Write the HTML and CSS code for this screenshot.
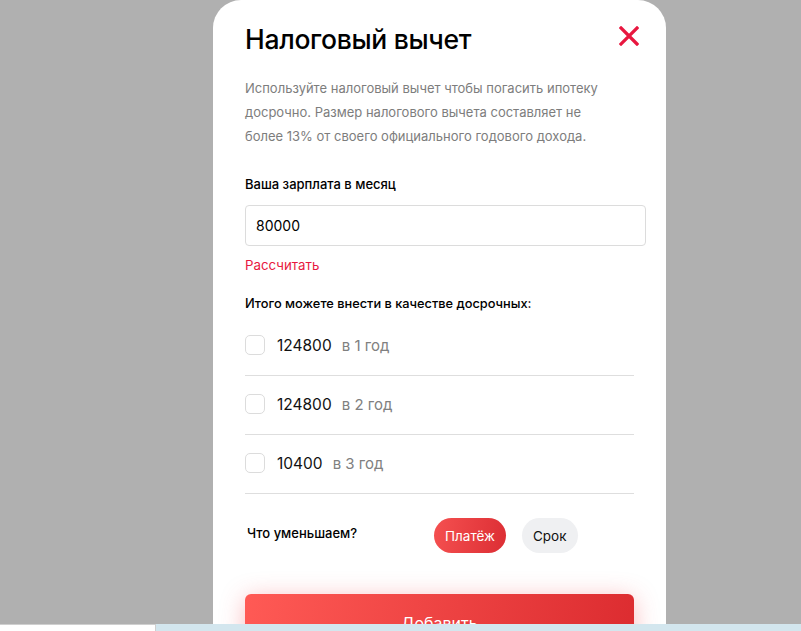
FILE: index.html
```html
<!DOCTYPE html>
<html lang="ru">
<head>
<meta charset="utf-8">
<title>Налоговый вычет</title>
<link rel="stylesheet" href="styles.css">
</head>
<body>
<div class="page">
  <div class="modal">
    <div class="head">
      <h1 class="title">Налоговый вычет</h1>
      <button class="close" aria-label="Закрыть">
        <svg width="20" height="20" viewBox="0 0 20 20"><path d="M2 2L18 18M18 2L2 18" stroke="#e8173f" stroke-width="3.2" stroke-linecap="square"/></svg>
      </button>
    </div>
    <p class="desc">Используйте налоговый вычет чтобы погасить ипотеку досрочно. Размер налогового вычета составляет не более 13% от своего официального годового дохода.</p>
    <div class="label">Ваша зарплата в месяц</div>
    <div class="input">80000</div>
    <div class="link">Рассчитать</div>
    <div class="label total">Итого можете внести в качестве досрочных:</div>
    <div class="list">
      <div class="row"><span class="check"></span><span class="sum">124800</span><span class="year">в 1 год</span></div>
      <div class="row"><span class="check"></span><span class="sum">124800</span><span class="year">в 2 год</span></div>
      <div class="row"><span class="check"></span><span class="sum">10400</span><span class="year">в 3 год</span></div>
    </div>
    <div class="reduce">
      <div class="reduce-label">Что уменьшаем?</div>
      <div class="chips">
        <span class="chip active">Платёж</span>
        <span class="chip">Срок</span>
      </div>
    </div>
    <button class="submit">Добавить</button>
  </div>
</div>
<div class="strip">
  <div class="strip-left"></div>
  <div class="strip-right"></div>
</div>
</body>
</html>
```
FILE: styles.css
```css
html, body {
  margin: 0;
  padding: 0;
  height: 100%;
  overflow: hidden;
}
body {
  background: #b0b0b0;
  font-family: Inter, "Noto Sans", sans-serif;
  color: #111;
}
.page {
  display: flex;
  padding-left: 213px;
}
.modal {
  width: 453px;
  box-sizing: border-box;
  background: #fff;
  border-radius: 28px 28px 0 0;
  padding: 22px 32px 60px 32px;
  min-height: 700px;
}
.head {
  display: flex;
  justify-content: space-between;
  align-items: flex-start;
}
.title {
  margin: 0;
  font-size: 26.5px;
  line-height: 34px;
  font-weight: 500;
  letter-spacing: -0.3px;
  color: #000;
}
.close {
  border: 0;
  background: none;
  padding: 0;
  margin: 4px -5px 0 0;
  width: 20px;
  height: 20px;
  cursor: pointer;
}
.desc {
  margin: 20px 0 0 0;
  width: 370px;
  font-size: 13px;
  line-height: 24px;
  color: #7d7d7d;
}
.label {
  margin-top: 26px;
  font-size: 13px;
  line-height: 20px;
  font-weight: 500;
  color: #000;
}
.input {
  margin-top: 11px;
  width: 401px;
  height: 41px;
  box-sizing: border-box;
  border: 1px solid #dcdcdc;
  border-radius: 4px;
  padding-left: 10px;
  display: flex;
  align-items: center;
  font-size: 14px;
  color: #000;
}
.link {
  margin-top: 9px;
  font-size: 13.3px;
  line-height: 20px;
  color: #e8173f;
}
.label.total {
  margin-top: 19px;
  font-size: 12.8px;
}
.list {
  margin-top: 3px;
  width: 389px;
}
.row {
  display: flex;
  align-items: center;
  padding: 18px 0 20px 0;
  border-bottom: 1px solid #dedede;
  height: 20px;
}
.check {
  width: 20px;
  height: 20px;
  box-sizing: border-box;
  border: 1px solid #dcdcdc;
  border-radius: 5px;
  margin-right: 12px;
}
.sum {
  font-size: 15.5px;
  color: #111;
  margin-right: 10px;
}
.year {
  font-size: 15px;
  color: #808080;
}
.reduce {
  display: flex;
  align-items: center;
  margin-top: 24px;
}
.reduce-label {
  width: 189px;
  padding-left: 2px;
  box-sizing: border-box;
  font-size: 13px;
  font-weight: 500;
  color: #000;
  margin-top: -5px;
}
.chips {
  display: flex;
  gap: 16px;
}
.chip {
  height: 35px;
  padding: 0 11px;
  border-radius: 18px;
  display: flex;
  align-items: center;
  font-size: 13.5px;
  background: #eff0f2;
  color: #111;
}
.chip.active {
  background: linear-gradient(100deg, #f55050, #dc2e34);
  color: #fff;
}
.submit {
  margin-top: 41px;
  width: 389px;
  height: 56px;
  border: 0;
  border-radius: 6px;
  background: linear-gradient(100deg, #ff5a55, #dc2c30);
  box-shadow: 0 4px 24px rgba(240, 60, 70, 0.35);
  color: #fff;
  font-family: inherit;
  font-size: 16px;
  padding-top: 2px;
}
.strip {
  position: fixed;
  left: 0;
  right: 0;
  bottom: 0;
  height: 7px;
  display: flex;
}
.strip-left {
  width: 155px;
  background: #fff;
  border-top: 1px solid #cfcfcf;
  border-right: 1px solid #cfcfcf;
}
.strip-right {
  flex: 1;
  background: #d3e6ee;
}
```
